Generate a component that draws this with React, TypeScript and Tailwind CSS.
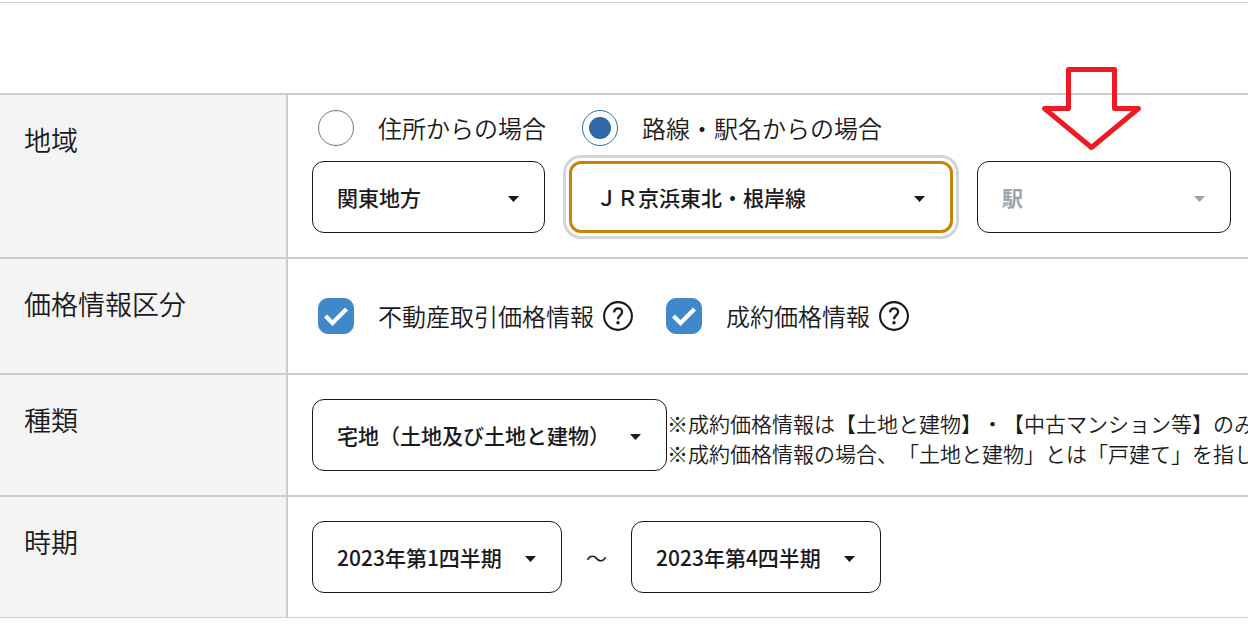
import type { ComponentProps, ReactNode } from "react";

const quarters = ["2023年第1四半期", "2023年第2四半期", "2023年第3四半期", "2023年第4四半期"];

function Row({ label, children }: { label: string; children: ReactNode }) {
  return (
    <div role="group" aria-label={label} className="flex border-t-2 border-[#cccccc]">
      <div className="w-[288px] shrink-0 border-r-2 border-[#cccccc] bg-[#f4f4f4] p-6 text-[27px] leading-[41px]">
        {label}
      </div>
      <div className="min-w-0 flex-1 px-6">{children}</div>
    </div>
  );
}

function Select({
  label,
  options,
  active,
  width,
  ...props
}: ComponentProps<"select"> & { label: string; options: string[]; active?: boolean; width: string }) {
  return (
    <div className={`grid shrink-0 items-center ${width}`}>
      <select
        aria-label={label}
        className={`col-start-1 row-start-1 h-[72px] w-full appearance-none rounded-xl bg-white px-6 text-[21px] font-medium text-[#1a1a1c] outline-none disabled:font-bold disabled:text-[#9ba1ad] disabled:opacity-100 ${
          active ? "border-3 border-[#c9820b] ring-3 ring-[#d2d4d9] ring-offset-3" : "border border-[#1a1a1c]"
        }`}
        {...props}
      >
        {options.map((o) => (
          <option key={o}>{o}</option>
        ))}
      </select>
      <svg
        viewBox="0 0 11 6"
        className={`pointer-events-none col-start-1 row-start-1 mt-1 h-[6px] w-[11px] justify-self-end ${
          active ? "mr-7" : "mr-[26px]"
        } ${props.disabled ? "fill-[#9ba1ad]" : "fill-[#1a1a1c]"}`}
      >
        <path d="M0 0h11L5.5 6z" />
      </svg>
    </div>
  );
}

function Radio({ label, checked }: { label: string; checked?: boolean }) {
  return (
    <label className="flex items-center gap-6">
      <input
        type="radio"
        name="area"
        defaultChecked={checked}
        className="grid size-9 appearance-none place-items-center rounded-full border border-[#767676] before:size-[22px] before:rounded-full checked:border-[#2d6aa6] checked:before:bg-[#2d6aa6]"
      />
      {label}
    </label>
  );
}

function Check({ label }: { label: string }) {
  return (
    <div className="flex items-center gap-[9px]">
      <label className="flex items-center gap-6">
        <span className="grid">
          <input
            type="checkbox"
            defaultChecked
            className="col-start-1 row-start-1 size-9 appearance-none rounded-[10px] border border-[#767676] checked:border-[#4088c9] checked:bg-[#4088c9]"
          />
          <svg viewBox="0 0 36 36" className="pointer-events-none col-start-1 row-start-1 size-9">
            <path d="M7.5 18l7 7 14-14" fill="none" stroke="#fff" strokeWidth="4.2" />
          </svg>
        </span>
        {label}
      </label>
      <button type="button" aria-label={`${label}の説明`}>
        <svg viewBox="0 0 30 30" className="size-[30px]" fill="none" stroke="#1a1a1c">
          <circle cx="15" cy="15" r="13.9" strokeWidth="2.1" />
          <path d="M11 11.3c.4-2.6 2-4 4.1-4 2.3 0 4 1.5 4 3.6 0 3.3-4.1 3.7-4.1 7.4" strokeWidth="2.3" />
          <circle cx="15" cy="21.8" r="1.7" fill="#1a1a1c" stroke="none" />
        </svg>
      </button>
    </div>
  );
}

export default function App() {
  return (
    <main
      lang="ja"
      className="overflow-hidden bg-white pt-[2px] font-['Noto_Sans_CJK_JP',sans-serif] text-2xl font-[350] text-[#1a1a1c] [text-spacing-trim:space-all]"
    >
      <form className="border-t border-[#cccccc] pt-[90px]">
        <div className="border-b border-[#cccccc]">
          <Row label="地域">
            <div className="flex min-h-[66px] items-center gap-9 pl-[6px]">
              <Radio label="住所からの場合" />
              <Radio label="路線・駅名からの場合" checked />
            </div>
            <div className="flex gap-6 pb-6">
              <Select label="地方" options={["関東地方"]} width="w-[233px]" />
              <Select label="路線" options={["ＪＲ京浜東北・根岸線"]} width="w-[384px]" active />
              <div className="relative shrink-0">
                <Select label="駅" options={["駅"]} width="w-[254px]" disabled />
                <svg
                  viewBox="0 0 100 84"
                  className="pointer-events-none absolute bottom-[82px] left-16 h-[84px] w-[100px]"
                >
                  <path
                    d="M27.5 2.5h46v39h24l-47 39-47-39h24z"
                    fill="none"
                    stroke="#ed1c24"
                    strokeWidth="5"
                    strokeLinejoin="round"
                  />
                </svg>
              </div>
            </div>
          </Row>
          <Row label="価格情報区分">
            <div className="flex min-h-[114px] items-center gap-[33px] pl-[6px]">
              <Check label="不動産取引価格情報" />
              <Check label="成約価格情報" />
            </div>
          </Row>
          <Row label="種類">
            <div className="flex items-end py-6">
              <Select label="種類" options={["宅地（土地及び土地と建物）"]} width="w-[355px]" />
              <p className="pb-[3px] text-[21px] leading-[30px] whitespace-nowrap">
                ※成約価格情報は【土地と建物】・【中古マンション等】のみ
                <br />
                ※成約価格情報の場合、「土地と建物」とは「戸建て」を指し
              </p>
            </div>
          </Row>
          <Row label="時期">
            <div className="flex items-center gap-6 py-6">
              <Select label="開始時期" options={quarters} defaultValue={quarters[0]} width="w-[250px]" />
              <span className="text-[21px]">～</span>
              <Select label="終了時期" options={quarters} defaultValue={quarters[3]} width="w-[250px]" />
            </div>
          </Row>
        </div>
      </form>
    </main>
  );
}
